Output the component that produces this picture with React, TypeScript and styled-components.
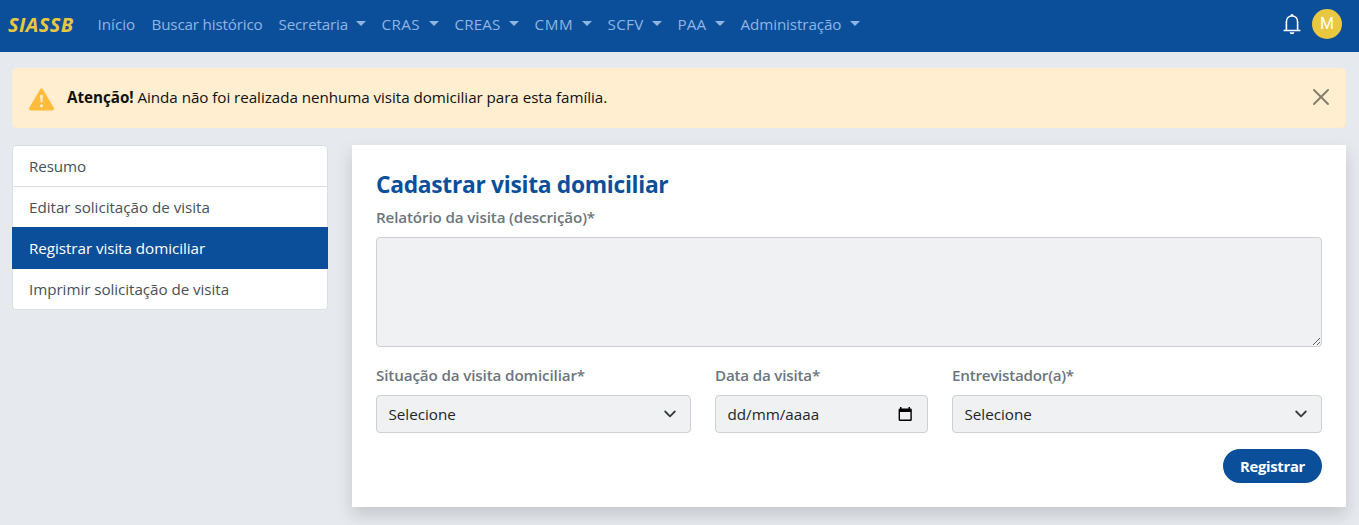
import React from 'react';
import styled, { createGlobalStyle, css } from 'styled-components';
import { BsExclamationTriangleFill } from 'react-icons/bs';

const blue = '#0b4f9b';
const yellow = '#e9c740';

const Global = createGlobalStyle`
  *, *::before, *::after { box-sizing: border-box; }
  body {
    margin: 0;
    background: #e6e9ee;
    color: #212529;
    font: 400 15.2px/24px "Open Sans", "Noto Sans", sans-serif;
  }
  #root { height: 525px; overflow: hidden; }
`;

const Navbar = styled.nav`
  display: flex;
  align-items: center;
  height: 52px;
  padding: 0 17px 4px 8px;
  background: ${blue};
`;
const Brand = styled.a`
  width: 82px;
  padding-top: 1px;
  color: ${yellow};
  font-size: 20px;
  font-weight: 700;
  font-style: italic;
  letter-spacing: 0.4px;
`;
const NavItem = styled.a<{ $w: number; $track?: number }>`
  display: flex;
  align-items: center;
  width: ${p => p.$w}px;
  padding: 0 8px 0 7.5px;
  color: #8fb5e3;
  white-space: nowrap;
  letter-spacing: ${p => p.$track ?? 0}px;
`;
const Caret = styled.span`
  margin: -1px 0 0 auto;
  border: 5px solid transparent;
  border-top-color: currentColor;
  border-bottom: 0;
`;
const NavEnd = styled.div`
  display: flex;
  align-items: center;
  gap: 11px;
  margin-left: auto;
`;
const BellIcon = styled.svg`
  display: block;
  width: 18px;
  height: 22px;
`;
const Avatar = styled.span`
  display: grid;
  place-items: center;
  width: 30px;
  height: 30px;
  border-radius: 50%;
  background: ${yellow};
  color: #fff;
  font: 400 16px/30px Roboto, sans-serif;
`;

const Page = styled.main`
  padding: 16px 13px 18px 12px;
`;
const Alert = styled.div`
  display: flex;
  align-items: center;
  height: 60px;
  margin-bottom: 17px;
  padding: 0 17px 2px;
  border: 1px solid #ffecc8;
  border-radius: 4px;
  background: #ffeed0;
  color: #111;
`;
const WarnIcon = styled(BsExclamationTriangleFill)`
  width: 25px;
  height: 25px;
  margin: 4px 13px 0 -1px;
  color: #ffbc3b;
`;
const Message = styled.span`
  letter-spacing: -0.05px;
  b { letter-spacing: -0.02px; }
`;
const CloseIcon = styled.svg`
  width: 16px;
  height: 16px;
  margin: -1px -1px 0 auto;
`;

const Columns = styled.div`
  display: grid;
  grid-template-columns: 316px 1fr;
  gap: 24px;
  align-items: start;
`;
const Menu = styled.div`
  display: flex;
  flex-direction: column;
`;
const MenuItem = styled.a<{ $active?: boolean; $track: number }>`
  height: 41px;
  padding: 8px 16px;
  border: 1px solid #dcdfe2;
  border-top: 0;
  background: #fff;
  color: #495057;
  letter-spacing: ${p => p.$track}px;
  &:first-child { height: 42px; border-top: 1px solid #dcdfe2; border-radius: 4px 4px 0 0; }
  &:last-child { border-radius: 0 0 4px 4px; }
  ${p => p.$active && css`
    height: 42px;
    margin-top: -1px;
    padding-top: 9px;
    border-color: ${blue};
    background: ${blue};
    color: #fff;
  `}
`;
const Card = styled.form`
  display: flex;
  flex-direction: column;
  height: 362px;
  padding: 25px 24px 24px;
  background: #fff;
  box-shadow: 0 8px 16px rgba(0, 0, 0, 0.15);
`;
const Title = styled.h1`
  margin: 0 0 6px;
  color: ${blue};
  font-size: 22.8px;
  font-weight: 700;
  line-height: 29px;
  letter-spacing: -0.3px;
`;
const Label = styled.label<{ $track: number }>`
  display: block;
  margin-bottom: 8px;
  color: #6c757d;
  font-weight: 600;
  line-height: 24px;
  letter-spacing: ${p => p.$track}px;
`;
const control = css`
  display: block;
  width: 100%;
  border: 1px solid #ced0d3;
  border-radius: 4px;
  background: #f0f1f3;
  color: #212529;
`;
const TextArea = styled.textarea`
  ${control}
  flex: none;
  height: 110px;
  margin: 0 0 16px;
  resize: vertical;
`;
const Fields = styled.div`
  display: grid;
  grid-template-columns: 315px 213px 1fr;
  gap: 24px;
  margin-bottom: 16px;
`;
const Control = styled.div`
  ${control}
  display: flex;
  align-items: center;
  justify-content: space-between;
  height: 38px;
  padding: 0 12px 0 11.5px;
`;
const Chevron = styled.svg`
  width: 16px;
  height: 12px;
`;
const Submit = styled.button`
  align-self: flex-end;
  width: 99px;
  height: 34px;
  padding: 0;
  border: 0;
  border-radius: 17px;
  background: ${blue};
  color: #fff;
  font: 700 14.8px/34px "Open Sans", sans-serif;
  letter-spacing: -0.28px;
`;

const nav = [
  { text: 'Início', w: 54 },
  { text: 'Buscar histórico', w: 127, track: -0.16 },
  { text: 'Secretaria', w: 103, track: -0.17, menu: true },
  { text: 'CRAS', w: 73, track: 0.4, menu: true },
  { text: 'CREAS', w: 80, track: 0.14, menu: true },
  { text: 'CMM', w: 73, track: 0.6, menu: true },
  { text: 'SCFV', w: 70, track: 0.3, menu: true },
  { text: 'PAA', w: 63, track: 0.15, menu: true },
  { text: 'Administração', w: 135, track: -0.1, menu: true },
];

const Select = () => (
  <Control role="combobox">
    Selecione
    <Chevron viewBox="0 0 16 12" fill="none" stroke="#343a40" strokeWidth="1.8" strokeLinecap="round" strokeLinejoin="round">
      <path d="M3.2 3.5l4.800 4.800 4.800-4.800" />
    </Chevron>
  </Control>
);

export default function App() {
  return (
    <>
      <Global />
      <Navbar>
        <Brand>SIASSB</Brand>
        {nav.map(n => (
          <NavItem key={n.text} $w={n.w} $track={n.track}>
            {n.text}
            {n.menu && <Caret />}
          </NavItem>
        ))}
        <NavEnd>
          <BellIcon viewBox="0 0 18 22" fill="none" stroke="#fff" strokeWidth="1.6">
            <path d="M.6 17.500h16.800M3.400 17.500V9.100C3.400 5.400 5.800 3 9 3s5.600 2.400 5.600 6.100v8.400" />
            <path d="M7.400 3a1.600 1.900 0 0 1 3.200 0zM6.600 19.300h4.800a2.400 2 0 0 1-4.800 0z" fill="#fff" stroke="none" />
          </BellIcon>
          <Avatar>M</Avatar>
        </NavEnd>
      </Navbar>
      <Page>
        <Alert>
          <WarnIcon />
          <Message><b>Atenção!</b> Ainda não foi realizada nenhuma visita domiciliar para esta família.</Message>
          <CloseIcon viewBox="0 0 16 16" stroke="#857d6c" strokeWidth="1.9" strokeLinecap="round">
            <path d="M1 1l14 14M15 1L1 15" />
          </CloseIcon>
        </Alert>
        <Columns>
          <Menu>
            <MenuItem $track={-0.11}>Resumo</MenuItem>
            <MenuItem $track={-0.02}>Editar solicitação de visita</MenuItem>
            <MenuItem $active $track={-0.05}>Registrar visita domiciliar</MenuItem>
            <MenuItem $track={-0.05}>Imprimir solicitação de visita</MenuItem>
          </Menu>
          <Card>
            <Title>Cadastrar visita domiciliar</Title>
            <Label $track={-0.13}>Relatório da visita (descrição)*</Label>
            <TextArea />
            <Fields>
              <div>
                <Label $track={-0.13}>Situação da visita domiciliar*</Label>
                <Select />
              </div>
              <div>
                <Label $track={-0.2}>Data da visita*</Label>
                <Control>
                  dd/mm/aaaa
                  <svg width="20" height="16" viewBox="0 0 20 16">
                    <path fill="#000" fillRule="evenodd" d="M5 1h1.5v1.5h7V1H15v1.5h.5a1.3 1.3 0 0 1 1.3 1.3v9.9a1.3 1.3 0 0 1-1.3 1.3H4.900a1.3 1.3 0 0 1-1.3-1.3V3.800a1.3 1.3 0 0 1 1.3-1.3H5zM5 6v7.600h10.400V6z" />
                  </svg>
                </Control>
              </div>
              <div>
                <Label $track={-0.24}>Entrevistador(a)*</Label>
                <Select />
              </div>
            </Fields>
            <Submit type="button">Registrar</Submit>
          </Card>
        </Columns>
      </Page>
    </>
  );
}
